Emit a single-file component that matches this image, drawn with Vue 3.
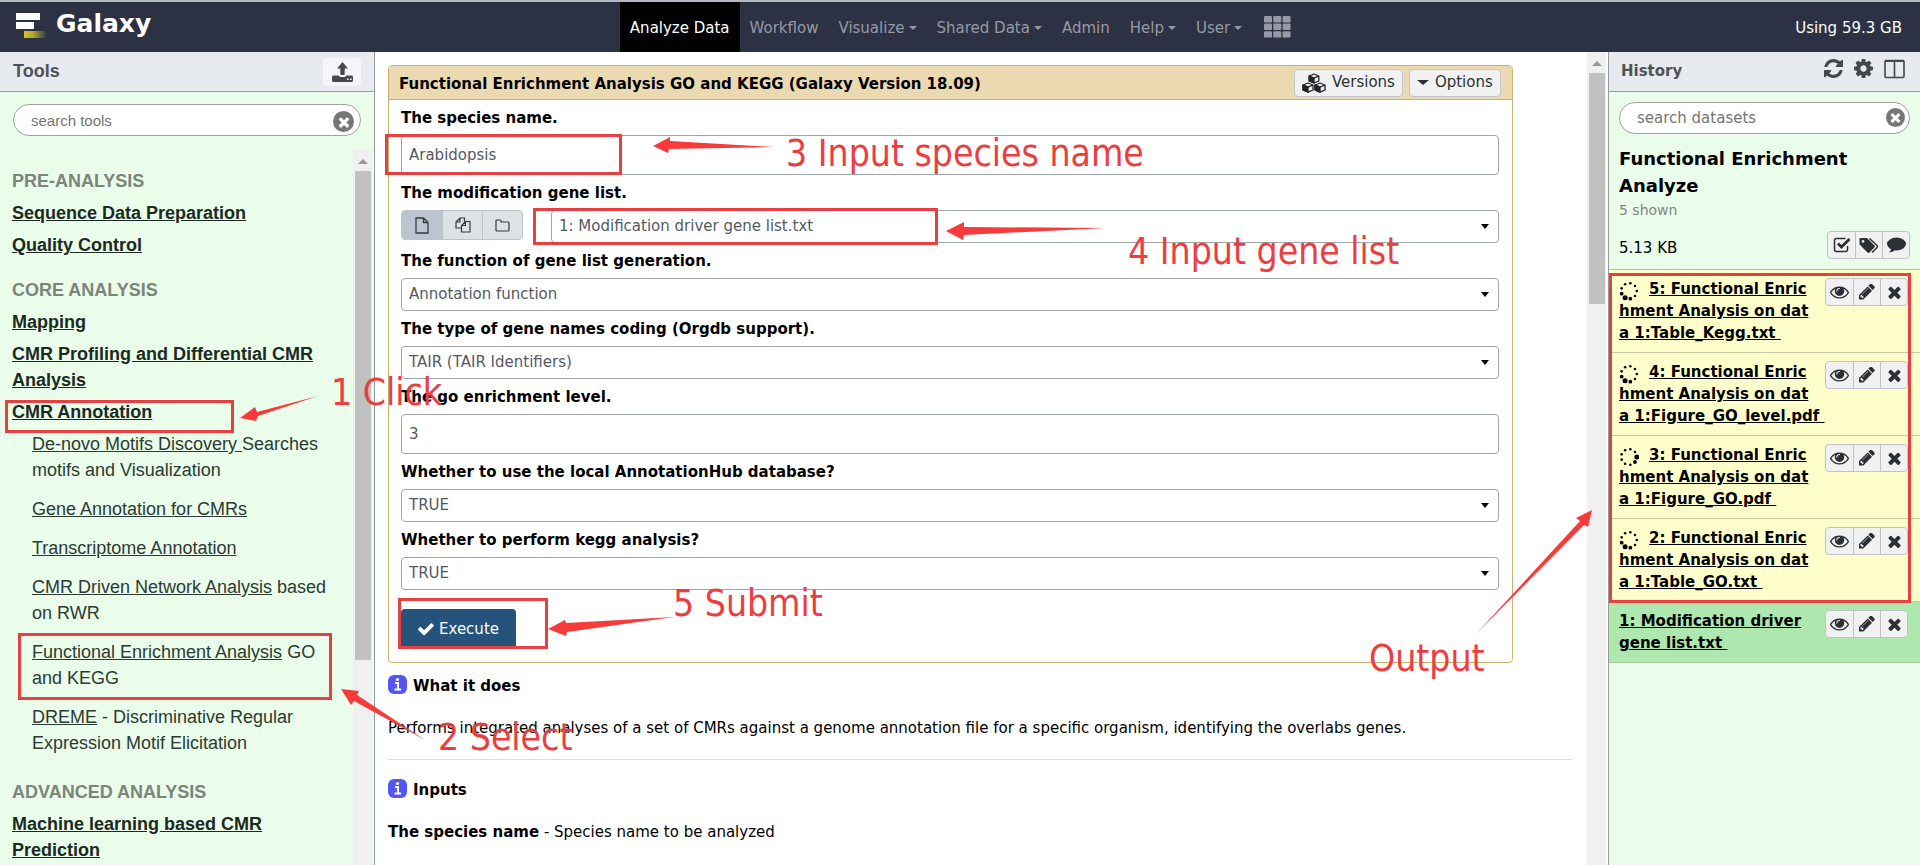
<script setup>
import { ref } from 'vue'

const icons = {
  times: 'M1490 1322q0 40-28 68l-136 136q-28 28-68 28t-68-28l-294-294-294 294q-28 28-68 28t-68-28l-136-136q-28-28-28-68t28-68l294-294-294-294q-28-28-28-68t28-68l136-136q28-28 68-28t68 28l294 294 294-294q28-28 68-28t68 28l136 136q28 28 28 68t-28 68l-294 294 294 294q28 28 28 68z',
  check: 'M1671 566q0 40-28 68l-724 724-136 136q-28 28-68 28t-68-28l-136-136-362-362q-28-28-28-68t28-68l136-136q28-28 68-28t68 28l294 295 656-657q28-28 68-28t68 28l136 136q28 28 28 68z',
  eye: 'M1664 960q-152-236-381-353 61 104 61 225 0 185-131.5 316.5t-316.5 131.5-316.5-131.5-131.5-316.5q0-121 61-225-229 117-381 353 133 205 333.5 326.5t434.5 121.5 434.5-121.5 333.5-326.5zm-720-384q0-20-14-34t-34-14q-125 0-214.5 89.5t-89.5 214.5q0 20 14 34t34 14 34-14 14-34q0-86 61-147t147-61q20 0 34-14t14-34zm848 384q0 34-20 69-140 230-376.5 368.5t-499.5 138.5-499.5-139-376.5-368q-20-35-20-69t20-69q140-229 376.5-368t499.5-139 499.5 139 376.5 368q20 35 20 69z',
  pencil: 'M491 1536l91-91-235-235-91 91v107h128v128h107zm523-928q0-22-22-22-10 0-17 7l-542 542q-7 7-7 17 0 22 22 22 10 0 17-7l542-542q7-7 7-17zm-54-192l416 416-832 832h-416v-416zm683 96q0 53-37 90l-166 166-416-416 166-165q36-38 90-38 53 0 91 38l235 234q37 39 37 91z',
  cog: 'M1152 896q0-106-75-181t-181-75-181 75-75 181 75 181 181 75 181-75 75-181zm512-109v222q0 12-8 23t-20 13l-185 28q-19 54-39 91 35 50 107 138 10 12 10 25t-9 23q-27 37-99 108t-94 71q-12 0-26-9l-138-108q-44 23-91 38-16 136-29 186-7 28-36 28h-222q-14 0-24.5-8.5t-11.5-21.5l-28-184q-49-16-90-37l-141 107q-10 9-25 9-14 0-25-11-126-114-165-168-7-10-7-23 0-12 8-23 15-21 51-66.5t54-70.5q-27-50-41-99l-183-27q-13-2-21-12.5t-8-23.5v-222q0-12 8-23t19-13l186-28q14-46 39-92-40-57-107-138-10-12-10-24 0-10 9-23 26-36 98.5-107.5t94.5-71.5q13 0 26 10l138 107q44-23 91-38 16-136 29-186 7-28 36-28h222q14 0 24.5 8.5t11.5 21.5l28 184q49 16 90 37l142-107q9-9 24-9 13 0 25 10 129 119 165 170 7 8 7 22 0 12-8 23-15 21-51 66.5t-54 70.5q26 50 41 98l183 28q13 2 21 12.5t8 23.5z',
  refresh: 'M1639 1056q0 5-1 7-64 268-268 434.5t-478 166.5q-146 0-282.5-55t-243.5-157l-129 129q-19 19-45 19t-45-19-19-45v-448q0-26 19-45t45-19h448q26 0 45 19t19 45-19 45l-137 137q71 66 161 102t187 36q134 0 250-65t186-179q11-17 53-117 8-23 30-23h192q13 0 22.5 9.5t9.5 22.5zm25-800v448q0 26-19 45t-45 19h-448q-26 0-45-19t-19-45 19-45l138-138q-148-137-349-137-134 0-250 65t-186 179q-11 17-53 117-8 23-30 23h-199q-13 0-22.5-9.5t-9.5-22.5v-7q65-268 270-434.5t480-166.5q146 0 284 55.5t245 156.5l130-129q19-19 45-19t45 19 19 45z'
}

const nav = [
  { label: 'Analyze Data', active: true },
  { label: 'Workflow' },
  { label: 'Visualize', menu: true },
  { label: 'Shared Data', menu: true },
  { label: 'Admin' },
  { label: 'Help', menu: true },
  { label: 'User', menu: true }
]

const sections = [
  {
    title: 'PRE-ANALYSIS',
    groups: [{ label: 'Sequence Data Preparation' }, { label: 'Quality Control' }]
  },
  {
    title: 'CORE ANALYSIS',
    groups: [
      { label: 'Mapping' },
      { label: 'CMR Profiling and Differential CMR Analysis' },
      {
        label: 'CMR Annotation',
        tools: [
          { link: 'De-novo Motifs Discovery\u00a0', text: 'Searches motifs and Visualization' },
          { link: 'Gene Annotation for CMRs', text: '' },
          { link: 'Transcriptome Annotation', text: '' },
          { link: 'CMR Driven Network Analysis', text: ' based on RWR' },
          { link: 'Functional Enrichment Analysis', text: ' GO and KEGG' },
          { link: 'DREME', text: ' - Discriminative Regular Expression Motif Elicitation' }
        ]
      }
    ]
  },
  {
    title: 'ADVANCED ANALYSIS',
    groups: [{ label: 'Machine learning based CMR Prediction' }]
  }
]

const fields = ref([
  { id: 'species', label: 'The species name.', kind: 'text', value: 'Arabidopsis' },
  { id: 'genes', label: 'The modification gene list.', kind: 'data', value: '1: Modification driver gene list.txt' },
  { id: 'func', label: 'The function of gene list generation.', kind: 'select', value: 'Annotation function' },
  { id: 'orgdb', label: 'The type of gene names coding (Orgdb support).', kind: 'select', value: 'TAIR (TAIR Identifiers)' },
  { id: 'level', label: 'The go enrichment level.', kind: 'text', value: '3' },
  { id: 'hub', label: 'Whether to use the local AnnotationHub database?', kind: 'select', value: 'TRUE' },
  { id: 'kegg', label: 'Whether to perform kegg analysis?', kind: 'select', value: 'TRUE' }
])

const datasets = [
  { lines: ['5: Functional Enric', 'hment Analysis on dat', 'a 1:Table_Kegg.txt\u00a0'], running: true, heavy: 4 },
  { lines: ['4: Functional Enric', 'hment Analysis on dat', 'a 1:Figure_GO_level.pdf\u00a0'], running: true, heavy: 4 },
  { lines: ['3: Functional Enric', 'hment Analysis on dat', 'a 1:Figure_GO.pdf\u00a0'], running: true, heavy: 1 },
  { lines: ['2: Functional Enric', 'hment Analysis on dat', 'a 1:Table_GO.txt\u00a0'], running: true, heavy: 4 },
  { lines: ['1: Modification driver', 'gene list.txt\u00a0'], running: false }
]

function dots(heavy) {
  return Array.from({ length: 9 }, (_, i) => {
    const a = (i * 40 * Math.PI) / 180
    const gap = Math.abs(heavy - i)
    const r = gap === 0 ? 2.5 : gap === 1 ? 1.9 : 1.3
    return { x: 10 + 7.8 * Math.cos(a), y: 10 + 7.8 * Math.sin(a), r }
  })
}

const frames = [
  [5, 400, 229, 33],
  [18, 633, 314, 67],
  [385, 134, 237, 41],
  [533, 208, 405, 37],
  [398, 598, 150, 51],
  [1609, 273, 302, 330]
]

const arrows = [
  '240,418 255,407 257,412 318,396 258,416 256,421',
  '341,689 359,691 357,695 425,740 354,701 351,705',
  '653,146 670,137 670,141 774,147 669,149 668,153',
  '946,231 964,222 964,227 1106,228 964,235 963,240',
  '548,629 565,620 566,623 674,617 567,632 566,636',
  '1592,510 1576,518 1580,521 1475,635 1584,525 1588,527'
]

const notes = [
  { x: 331, y: 405, text: '1 Click' },
  { x: 438, y: 750, text: '2 Select' },
  { x: 786, y: 166, text: '3 Input species name' },
  { x: 1128, y: 264, text: '4 Input gene list' },
  { x: 673, y: 616, text: '5 Submit' },
  { x: 1369, y: 671, text: 'Output' }
]
</script>

<template>
  <div class="app">
    <header class="masthead">
      <a class="brand" href="#">
        <svg width="32" height="27" viewBox="0 0 32 27">
          <defs>
            <linearGradient id="tail"><stop offset="0" stop-color="#d8c52a" /><stop offset="0.4" stop-color="#b3a52e" /><stop offset="1" stop-color="#2c3143" /></linearGradient>
          </defs>
          <rect y="1" width="24" height="7" fill="#fff" />
          <rect y="10" width="18" height="7" fill="#fff" />
          <rect x="8" y="19" width="23" height="7" fill="url(#tail)" />
        </svg>
        <span>Galaxy</span>
      </a>
      <nav class="nav">
        <a v-for="n in nav" :key="n.label" href="#" :class="{ active: n.active }">{{ n.label }}<i v-if="n.menu" class="caret"></i></a>
        <a href="#" class="grid-link" aria-label="Apps">
          <svg width="27" height="22" viewBox="0 0 27 22">
            <template v-for="r in 3" :key="r">
              <rect v-for="c in 3" :key="c" :x="(c - 1) * 9.3" :y="(r - 1) * 7.6" width="8" height="6.4" rx="1.2" fill="currentColor" />
            </template>
          </svg>
        </a>
      </nav>
      <div class="quota">Using 59.3 GB</div>
    </header>

    <div class="columns">
      <aside class="tools">
        <div class="panel-head">
          <h2>Tools</h2>
          <button class="upload" aria-label="Upload">
            <svg width="21" height="20" viewBox="0 0 21 20" fill="currentColor">
              <path d="M10.500 0L16 6.500h-3.300V12q0 1-1 1H9.300q-1 0-1-1V6.500H5z" />
              <path d="M1.500 13.500h5.300q.6 1.500 2 1.500h3.400q1.400 0 2-1.500h5.300q1.500 0 1.500 1.500v3.500q0 1.500-1.500 1.500h-18Q0 20 0 18.500V15q0-1.500 1.500-1.500zM15 16.500v1.600h1.600v-1.600zm3 0v1.600h1.600v-1.600z" fill-rule="evenodd" />
            </svg>
          </button>
        </div>
        <div class="search">
          <input type="text" placeholder="search tools" aria-label="search tools" />
          <button aria-label="Clear tool search"><svg width="12" height="12" viewBox="200 200 1392 1392"><path :d="icons.times" fill="#fff" /></svg></button>
        </div>
        <div class="tool-scroll">
          <div class="tool-list">
            <section v-for="s in sections" :key="s.title">
              <h3>{{ s.title }}</h3>
              <template v-for="g in s.groups" :key="g.label">
                <a class="group" href="#">{{ g.label }}</a>
                <ul v-if="g.tools">
                  <li v-for="t in g.tools" :key="t.link"><a href="#">{{ t.link }}</a>{{ t.text }}</li>
                </ul>
              </template>
            </section>
          </div>
          <div class="bar"><i class="up"></i><div class="thumb tall"></div></div>
        </div>
      </aside>

      <main class="center">
        <div class="content">
          <form class="card" @submit.prevent>
            <div class="card-head">
              <h1>Functional Enrichment Analysis GO and KEGG (Galaxy Version 18.09)</h1>
              <button type="button" class="small">
                <svg width="24" height="20" viewBox="0 0 24 20" fill="#f1f1f2" stroke="#212529" stroke-width="1.300" stroke-linejoin="round">
                  <path d="M12 1l4.800 2v5L12 10 7.200 8V3z" /><path d="M7.200 3L12 5.200 16.800 3" fill="none" /><path d="M12 5.200V10L7.200 8V3z" fill="#212529" />
                  <path d="M6 10l5 2v5l-5 2.200L1 17v-5z" /><path d="M1 12l5 2.200L11 12" fill="none" /><path d="M6 14.200v5L1 17v-5z" fill="#212529" />
                  <path d="M18 10l5 2v5l-5 2.200-5-2.200v-5z" /><path d="M13 12l5 2.200 5-2.200" fill="none" /><path d="M18 14.200v5L13 17v-5z" fill="#212529" />
                </svg>
                Versions
              </button>
              <button type="button" class="small"><i class="caret big"></i>Options</button>
            </div>
            <div class="card-body">
              <template v-for="f in fields" :key="f.id">
                <label :for="f.id">{{ f.label }}</label>
                <input v-if="f.kind === 'text'" :id="f.id" v-model="f.value" type="text" class="control text" />
                <div v-else class="row">
                  <div v-if="f.kind === 'data'" class="toggle">
                    <button type="button" class="on" aria-label="Single dataset">
                      <svg width="14" height="17" viewBox="0 0 14 17" fill="none" stroke="currentColor" stroke-width="1.300"><path d="M1 1h7.500L13 5.500V16H1zM8.500 1v4.500H13" /></svg>
                    </button>
                    <button type="button" aria-label="Multiple datasets">
                      <svg width="16" height="16" viewBox="0 0 16 16" fill="none" stroke="currentColor" stroke-width="1.200"><path d="M6.500 11H1V5l4-4h4.500v3.500M5 1v4H1M6.500 15V8.500l4-4H15V15zM10.500 4.500v4h-4" /></svg>
                    </button>
                    <button type="button" aria-label="Dataset collection">
                      <svg width="15" height="13" viewBox="0 0 15 13" fill="none" stroke="currentColor" stroke-width="1.200"><path d="M1 2q0-1 1-1h3q1 0 1 1v1h7q1 0 1 1v7q0 1-1 1H2q-1 0-1-1z" /></svg>
                    </button>
                  </div>
                  <div class="select">
                    <select :id="f.id" v-model="f.value" class="control"><option>{{ f.value }}</option></select>
                    <i class="caret"></i>
                  </div>
                </div>
              </template>
              <button type="submit" class="execute"><svg width="16" height="14" viewBox="110 250 1580 1290"><path :d="icons.check" fill="#fff" /></svg>Execute</button>
            </div>
          </form>

          <div class="help">
            <h4>
              <svg width="19" height="19" viewBox="0 0 19 19"><rect width="19" height="19" rx="6" fill="#5555f5" /><circle cx="9.500" cy="4.500" r="1.600" fill="#fff" /><path d="M7 8h3v5.500M6.500 14.500h6.500" stroke="#fff" stroke-width="2" fill="none" /></svg>
              What it does
            </h4>
            <p>Performs integrated analyses of a set of CMRs against a genome annotation file for a specific organism, identifying the overlabs genes.</p>
            <hr />
            <h4>
              <svg width="19" height="19" viewBox="0 0 19 19"><rect width="19" height="19" rx="6" fill="#5555f5" /><circle cx="9.500" cy="4.500" r="1.600" fill="#fff" /><path d="M7 8h3v5.500M6.500 14.500h6.500" stroke="#fff" stroke-width="2" fill="none" /></svg>
              Inputs
            </h4>
            <p><b>The species name</b> - Species name to be analyzed</p>
          </div>
        </div>
        <div class="bar"><i class="up"></i><div class="thumb"></div></div>
      </main>

      <aside class="history">
        <div class="panel-head">
          <h2>History</h2>
          <div class="head-icons">
            <button aria-label="Refresh"><svg width="19" height="19" viewBox="128 128 1536 1536"><path :d="icons.refresh" fill="currentColor" /></svg></button>
            <button aria-label="History options"><svg width="19" height="19" viewBox="128 128 1536 1536"><path :d="icons.cog" fill="currentColor" /></svg></button>
            <button aria-label="View all histories"><svg width="21" height="20" viewBox="0 0 21 20" fill="none" stroke="currentColor" stroke-width="1.600"><rect x="1" y="1.500" width="19" height="17" rx="1" /><path d="M1 2.200h19M10.500 2v16" /></svg></button>
          </div>
        </div>
        <div class="search">
          <input type="text" placeholder="search datasets" aria-label="search datasets" />
          <button aria-label="Clear dataset search"><svg width="11" height="11" viewBox="200 200 1392 1392"><path :d="icons.times" fill="#fff" /></svg></button>
        </div>
        <div class="summary">
          <h3>Functional Enrichment Analyze</h3>
          <p class="shown">5 shown</p>
          <div class="size">
            <span>5.13 KB</span>
            <div class="group-btns">
              <button aria-label="Select datasets">
                <svg width="18" height="16" viewBox="0 0 18 16" fill="none" stroke="currentColor"><path d="M14.500 9v3.500q0 2-2 2h-9q-2 0-2-2v-9q0-2 2-2h9" stroke-width="1.500" /><path d="M5 6.500l3.500 3.500L16.500 2" stroke-width="2.800" /></svg>
              </button>
              <button aria-label="Edit tags">
                <svg width="21" height="17" viewBox="0 0 21 17" fill="currentColor"><path d="M1 1h6q1 0 2 1l6.500 6.500q.8 1-.1 2L10.500 15.500q-1 .9-2 0L1.500 8.500Q.5 7.500.5 6.500V1.500Q.5 1 1 1zM4 3a1.400 1.400 0 1 0 .01 0z" fill-rule="evenodd" /><path d="M10.500 1.500l7.500 7q.8 1 0 2l-5 5" fill="none" stroke="currentColor" stroke-width="1.500" /></svg>
              </button>
              <button aria-label="Edit annotation">
                <svg width="19" height="17" viewBox="0 0 19 17" fill="currentColor"><ellipse cx="9.500" cy="7" rx="9.500" ry="6.500" /><path d="M4.500 10q0 3-2.500 5.500 5-.5 7-3.500z" /></svg>
              </button>
            </div>
          </div>
        </div>
        <div v-for="d in datasets" :key="d.lines[0]" class="dataset" :class="{ running: d.running }">
          <a href="#">
            <svg v-if="d.running" width="20" height="20" viewBox="0 0 20 20"><circle v-for="(p, i) in dots(d.heavy - 1)" :key="i" :cx="p.x" :cy="p.y" :r="p.r" /></svg>
            <template v-for="(l, i) in d.lines" :key="i"><span>{{ l }}</span><br /></template>
          </a>
          <div class="group-btns">
            <button aria-label="View data"><svg width="19" height="13" viewBox="0 370 1792 1180"><path :d="icons.eye" fill="currentColor" /></svg></button>
            <button aria-label="Edit attributes"><svg width="16" height="16" viewBox="128 230 1536 1450"><path :d="icons.pencil" fill="currentColor" /></svg></button>
            <button aria-label="Delete"><svg width="13" height="13" viewBox="290 290 1212 1272"><path :d="icons.times" fill="currentColor" /></svg></button>
          </div>
        </div>
      </aside>
    </div>

    <svg class="notes">
      <rect v-for="(f, i) in frames" :key="'f' + i" :x="f[0] + 1.5" :y="f[1] + 1.5" :width="f[2] - 3" :height="f[3] - 3" />
      <polygon v-for="(a, i) in arrows" :key="'a' + i" :points="a" />
      <text v-for="n in notes" :key="n.text" :x="n.x" :y="n.y">{{ n.text }}</text>
    </svg>
  </div>
</template>

<style>
body { margin: 0; overflow: hidden; }
</style>

<style scoped>
* { box-sizing: border-box; }
.app {
  position: relative;
  display: flex;
  flex-direction: column;
  height: 100vh;
  overflow: hidden;
  font: 15px/23px Verdana, "DejaVu Sans", sans-serif;
  color: #000;
  background: #fff;
}
h1, h2, h3, h4, p, ul { margin: 0; padding: 0; font-size: 15px; }
button { font: inherit; color: #2c3034; padding: 0; border: 0; background: none; }
svg { display: block; flex: none; }
.masthead {
  display: grid;
  grid-template-columns: 1fr auto 1fr;
  align-items: center;
  flex: none;
  height: 52px;
  background: #2c3143;
  border-top: 2px solid #b3bac2;
}
.brand {
  display: flex;
  align-items: center;
  gap: 8px;
  margin: 0 0 4px 16px;
  color: #fff;
  font-size: 25px;
  font-weight: bold;
  text-decoration: none;
}
.brand span { padding-bottom: 4px; }
.nav { display: flex; align-self: stretch; }
.nav a {
  display: flex;
  align-items: center;
  padding: 2px 10px 0;
  color: #979aa5;
  text-decoration: none;
}
.nav a.active { color: #fff; background: #000; }
.nav a.grid-link { padding: 0 9px 0 12px; }
.caret {
  display: inline-block;
  margin-left: 4px;
  border: 4px solid transparent;
  border-top: 4px solid currentColor;
  border-bottom: 0;
}
.caret.big { border-width: 5px 6px 0; margin: 0; }
.quota { justify-self: end; margin-right: 18px; padding-top: 2px; color: #fff; }
.columns { display: flex; flex: 1; min-height: 0; }
.tools {
  display: flex;
  flex-direction: column;
  flex: none;
  width: 375px;
  background: #eafcea;
  border-right: 1px solid #959b9b;
  font-family: "Liberation Sans", Arial, sans-serif;
}
.panel-head {
  display: flex;
  align-items: center;
  justify-content: space-between;
  flex: none;
  height: 40px;
  padding: 0 13px;
  background: #e7eaee;
  border-bottom: 1px solid #8f9f95;
  color: #4d5359;
}
.tools h2 { font-size: 18px; }
.upload {
  display: grid;
  place-items: center;
  width: 38px;
  height: 28px;
  border-radius: 4px;
  background: #f5f6f7;
  color: #43484d;
}
.search { position: relative; flex: none; margin: 12px 13px 14px; }
.search input {
  display: block;
  width: 100%;
  height: 32px;
  padding: 0 17px;
  border: 1px solid #9da59d;
  border-radius: 16px;
  font: inherit;
  background: #fff;
}
.search input::placeholder { color: #757575; opacity: 1; }
.search button {
  position: absolute;
  right: 7px;
  top: 7px;
  display: grid;
  place-items: center;
  width: 21px;
  height: 21px;
  border-radius: 50%;
  background: #777;
}
.tool-scroll { display: flex; flex: 1; min-height: 0; }
.tool-list {
  flex: 1;
  padding: 18px 16px 0 12px;
  overflow: hidden;
  font-size: 18px;
  line-height: 26px;
}
section + section { margin-top: 16px; }
.tool-list h3 { font-size: 18px; color: #7b857b; padding: 0 0 3px; }
.group { display: block; padding: 3px 0; font-weight: bold; color: #1b2a22; }
ul { list-style: none; padding: 3px 0 4px 20px; font-size: 18px; color: #2c3b33; }
li + li { margin-top: 13px; }
li a { color: inherit; }
section + section:last-child { margin-top: 19px; }
.bar {
  flex: none;
  width: 19px;
  padding: 0 1px 0 2px;
  margin-right: 2px;
  background: #f0f0f0;
}
.up {
  display: block;
  width: 0;
  height: 0;
  margin: 0 auto 7px;
  border: solid transparent;
  border-width: 9px 5px 5px;
  border-bottom-color: #989898;
}
.thumb { height: 231px; background: #c1c1c1; }
.thumb.tall { height: 489px; }
.center { display: flex; flex: 1; min-width: 0; }
.content { flex: 1; min-width: 0; padding: 13px 15px 13px 13px; overflow: hidden; }
.card {
  width: 95%;
  border: 1px solid #c9b36c;
  border-radius: 4px;
}
.card-head {
  display: flex;
  align-items: center;
  gap: 6px;
  height: 34px;
  padding: 0 11px 0 10px;
  background: #ebd9b2;
  border-bottom: 1px solid #c9b36c;
}
.card-head h1 { flex: 1; padding-top: 3px; }
.small {
  display: flex;
  align-items: center;
  gap: 6px;
  height: 28px;
  padding: 0 7px;
  border: 1px solid #c3c6c9;
  border-radius: 4px;
  background: #f1f1f2;
}
.card-body { padding: 0 13px 13px 12px; }
label { display: block; padding: 7px 0 5px; font-weight: bold; color: #000; }
.control {
  display: block;
  width: 100%;
  height: 33px;
  padding: 0 7px;
  border: 1px solid #a0a5a5;
  border-radius: 4px;
  background: #fff;
  color: #55595f;
  font: inherit;
  appearance: none;
}
.control.text { height: 40px; }
.row { display: flex; gap: 28px; align-items: flex-start; }
.select { position: relative; flex: 1; }
.select .caret { position: absolute; right: 10px; top: 14px; border-width: 5px 4px 0; color: #000; }
.toggle {
  display: flex;
  height: 30px;
  border: 1px solid #bcc3ca;
  border-radius: 4px;
  overflow: hidden;
  background: #dee2e6;
}
.toggle button { display: grid; place-items: center; width: 40px; color: #343a40; }
.toggle button + button { border-left: 1px solid #bcc3ca; }
.toggle .on { background: #bcc5cf; }
.execute {
  display: flex;
  align-items: center;
  gap: 5px;
  height: 40px;
  margin-top: 19px;
  padding: 0 17px;
  border-radius: 4px;
  background: #25537b;
  color: #fff;
}
.help { padding-top: 12px; }
.help h4 { display: flex; align-items: flex-start; gap: 6px; line-height: 23px; }
.help p { margin: 19px 0; }
.help hr { margin: 19px 0; border: 0; border-top: 1px solid #dcdcdc; }
.history {
  flex: none;
  width: 312px;
  background: #eafcea;
  border-left: 1px solid #959b9b;
}
.history .panel-head { padding: 0 15px 0 12px; }
.head-icons { display: flex; align-items: center; gap: 11px; padding-bottom: 6px; }
.head-icons button { color: #43484d; }
.history .search { margin: 10px 10px 11px; }
.history .search button { top: 6px; right: 5px; width: 19px; height: 19px; }
.summary { padding: 0 10px; height: 125px; border-bottom: 1px solid #b3bdae; }
.summary h3 { font-size: 18px; line-height: 27px; }
.shown { font-size: 14px; line-height: 23px; color: #7e887e; }
.size { display: flex; justify-content: space-between; padding-top: 9px; }
.size span { padding-top: 6px; }
.group-btns {
  display: flex;
  flex: none;
  height: 28px;
  border: 1px solid #bfc2c6;
  border-radius: 4px;
  background: #f1f1f2;
}
.group-btns button { display: grid; place-items: center; width: 27px; color: #2c3034; }
.group-btns button + button { border-left: 1px solid #bfc2c6; }
.dataset {
  display: flex;
  justify-content: space-between;
  align-items: flex-start;
  padding: 8px 12px 8px 10px;
  border-bottom: 1px solid #a9c3a2;
  background: #afe8af;
}
.dataset.running { background: #ffffcc; border-color: #c9c9a6; }
.dataset a { color: #000; font-weight: bold; line-height: 22px; white-space: nowrap; width: 200px; }
.dataset a svg { float: left; margin: 3px 10px -3px 0; }
.notes {
  position: absolute;
  left: 0;
  top: 0;
  width: 100%;
  height: 100%;
  pointer-events: none;
}
.notes rect { fill: none; stroke: #ea3f41; stroke-width: 3px; }
.notes polygon { fill: #f73b3b; }
.notes text { fill: #ee3d40; font: 37px "DejaVu Sans Condensed", "Noto Sans", sans-serif; }
</style>
